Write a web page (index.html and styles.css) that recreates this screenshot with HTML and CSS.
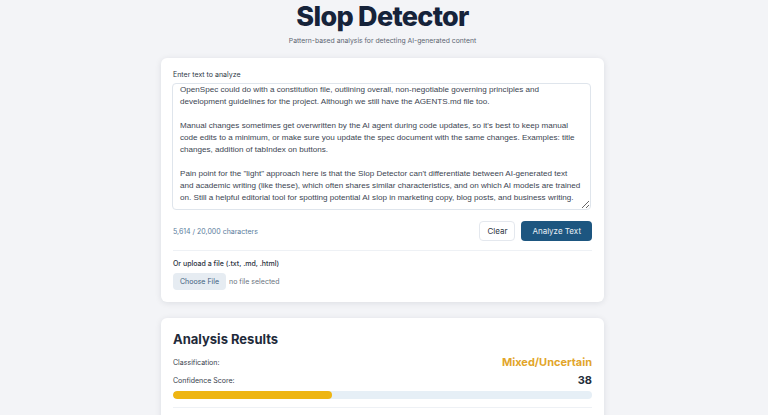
FILE: index.html
```html
<!DOCTYPE html>
<html>

<head>
    <title>Slop Detector</title>
    <link rel="stylesheet" href="styles.css">
</head>

<body>
    <div class="page">
        <header class="header">
            <h1 class="title">Slop Detector</h1>
            <p class="subtitle">Pattern-based analysis for detecting AI-generated content</p>
        </header>

        <div class="card">
            <label class="field-label" for="input">Enter text to analyze</label>
            <textarea class="input" id="input">OpenSpec could do with a constitution file, outlining overall, non-negotiable governing principles and development guidelines for the project. Although we still have the AGENTS.md file too.

Manual changes sometimes get overwritten by the AI agent during code updates, so it's best to keep manual code edits to a minimum, or make sure you update the spec document with the same changes. Examples: title changes, addition of tabIndex on buttons.

Pain point for the "light" approach here is that the Slop Detector can't differentiate between AI-generated text and academic writing (like these), which often shares similar characteristics, and on which AI models are trained on. Still a helpful editorial tool for spotting potential AI slop in marketing copy, blog posts, and business writing.</textarea>

            <div class="actions">
                <span class="count">5,614 / 20,000 characters</span>
                <div class="buttons">
                    <button class="btn btn-clear">Clear</button>
                    <button class="btn btn-primary">Analyze Text</button>
                </div>
            </div>

            <div class="upload">
                <div class="upload-label">Or upload a file (.txt, .md, .html)</div>
                <div class="file-row">
                    <button class="btn-file">Choose File</button>
                    <span class="file-name">no file selected</span>
                </div>
            </div>
        </div>

        <div class="card results">
            <h2 class="results-title">Analysis Results</h2>
            <div class="result-row">
                <span class="result-label">Classification:</span>
                <span class="classification">Mixed/Uncertain</span>
            </div>
            <div class="result-row">
                <span class="result-label">Confidence Score:</span>
                <span class="score">38</span>
            </div>
            <div class="meter">
                <div class="meter-fill" style="width: 38%"></div>
            </div>
            <div class="divider"></div>
        </div>
    </div>
</body>

</html>
```

FILE: styles.css
```css
body {
    font-family: Inter, "Liberation Sans", sans-serif;
    background-color: #f3f4f7;
    margin: 0;
    color: #1f2a3a;
}

.page {
    width: 443px;
    margin-left: calc(50% - 223px);
}

.header {
    text-align: center;
    padding-top: 1px;
}

.title {
    font-size: 27px;
    font-weight: 800;
    color: #16233a;
    margin: 0;
    line-height: 32px;
    letter-spacing: -0.7px;
}

.subtitle {
    font-size: 6.8px;
    color: #5d6672;
    margin: 3px 0 0;
}

.card {
    background-color: #fff;
    border-radius: 6px;
    padding: 12px;
    margin-top: 13px;
    box-shadow: 0 1px 6px rgba(20, 30, 50, 0.1);
}

.field-label {
    display: block;
    font-size: 7px;
    line-height: 10px;
    color: #2e3845;
    margin-bottom: 3px;
}

.input {
    display: block;
    box-sizing: border-box;
    width: 100%;
    height: 127px;
    padding: 0 7px;
    border: 1px solid #dfe5ec;
    border-radius: 4px;
    font-family: "Liberation Sans", Arial, sans-serif;
    font-size: 8.1px;
    line-height: 12px;
    color: #3c4552;
    resize: vertical;
    margin-left: -1px;
}

.actions {
    display: flex;
    justify-content: space-between;
    align-items: center;
    margin-top: 11px;
    padding-bottom: 9px;
    border-bottom: 1px solid #eef1f5;
}

.count {
    font-size: 7px;
    color: #5a7c9c;
}

.buttons {
    display: flex;
    gap: 6px;
}

.btn {
    font-family: Inter, "Liberation Sans", sans-serif;
    font-size: 8px;
    height: 20px;
    border-radius: 4px;
    white-space: nowrap;
    cursor: pointer;
}

.btn-clear {
    background-color: #fff;
    border: 1px solid #e4e8ee;
    color: #2c3440;
    padding: 0 7px;
}

.btn-primary {
    background-color: #1d5680;
    border: none;
    color: #eaf1f7;
    padding: 0 11px;
}

.upload {
    padding-top: 8px;
}

.upload-label {
    font-size: 7px;
    font-weight: 500;
    color: #2a323e;
}

.file-row {
    display: flex;
    align-items: center;
    gap: 3px;
    margin-top: 5px;
}

.btn-file {
    font-family: Inter, "Liberation Sans", sans-serif;
    font-size: 7px;
    height: 17px;
    padding: 0 7px;
    background-color: #e6ecf2;
    border: none;
    border-radius: 4px;
    color: #40607e;
}

.file-name {
    font-size: 7px;
    color: #6a7480;
}

.results {
    margin-top: 16px;
    padding-top: 13px;
}

.results-title {
    font-size: 13px;
    font-weight: 700;
    color: #1f2a3a;
    margin: 0 0 6px;
    line-height: 16px;
}

.result-row {
    display: flex;
    justify-content: space-between;
    align-items: center;
    height: 18px;
}

.result-label {
    font-size: 7px;
    color: #36404c;
}

.classification {
    font-size: 11px;
    font-weight: 700;
    color: #e2a52a;
}

.score {
    font-size: 11px;
    font-weight: 700;
    color: #232d3a;
}

.meter {
    height: 8px;
    margin-top: 2px;
    background-color: #e6eff6;
    border-radius: 4px;
    overflow: hidden;
}

.meter-fill {
    height: 100%;
    background-color: #eeb512;
    border-radius: 4px;
}

.divider {
    margin-top: 8px;
    border-top: 1px solid #eef1f5;
    height: 20px;
}
```
